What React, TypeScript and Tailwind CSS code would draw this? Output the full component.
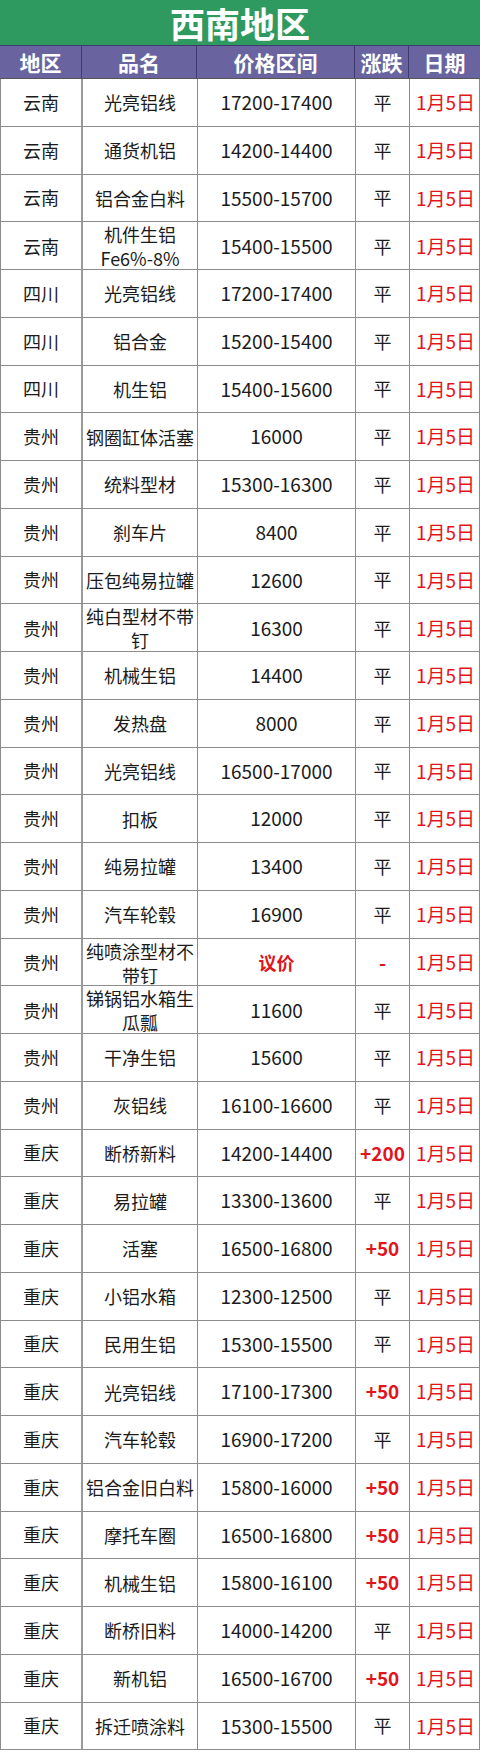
import React from 'react'

type Row = { area: string; name: string; price: string; change: string; date: string }

const rows: Row[] = [
    { area: '云南', name: '光亮铝线', price: '17200-17400', change: '平', date: '1月5日' },
    { area: '云南', name: '通货机铝', price: '14200-14400', change: '平', date: '1月5日' },
    { area: '云南', name: '铝合金白料', price: '15500-15700', change: '平', date: '1月5日' },
    { area: '云南', name: '机件生铝\nFe6%-8%', price: '15400-15500', change: '平', date: '1月5日' },
    { area: '四川', name: '光亮铝线', price: '17200-17400', change: '平', date: '1月5日' },
    { area: '四川', name: '铝合金', price: '15200-15400', change: '平', date: '1月5日' },
    { area: '四川', name: '机生铝', price: '15400-15600', change: '平', date: '1月5日' },
    { area: '贵州', name: '钢圈缸体活塞', price: '16000', change: '平', date: '1月5日' },
    { area: '贵州', name: '统料型材', price: '15300-16300', change: '平', date: '1月5日' },
    { area: '贵州', name: '刹车片', price: '8400', change: '平', date: '1月5日' },
    { area: '贵州', name: '压包纯易拉罐', price: '12600', change: '平', date: '1月5日' },
    { area: '贵州', name: '纯白型材不带\n钉', price: '16300', change: '平', date: '1月5日' },
    { area: '贵州', name: '机械生铝', price: '14400', change: '平', date: '1月5日' },
    { area: '贵州', name: '发热盘', price: '8000', change: '平', date: '1月5日' },
    { area: '贵州', name: '光亮铝线', price: '16500-17000', change: '平', date: '1月5日' },
    { area: '贵州', name: '扣板', price: '12000', change: '平', date: '1月5日' },
    { area: '贵州', name: '纯易拉罐', price: '13400', change: '平', date: '1月5日' },
    { area: '贵州', name: '汽车轮毂', price: '16900', change: '平', date: '1月5日' },
    { area: '贵州', name: '纯喷涂型材不\n带钉', price: '议价', change: '-', date: '1月5日' },
    { area: '贵州', name: '锑锅铝水箱生\n瓜瓢', price: '11600', change: '平', date: '1月5日' },
    { area: '贵州', name: '干净生铝', price: '15600', change: '平', date: '1月5日' },
    { area: '贵州', name: '灰铝线', price: '16100-16600', change: '平', date: '1月5日' },
    { area: '重庆', name: '断桥新料', price: '14200-14400', change: '+200', date: '1月5日' },
    { area: '重庆', name: '易拉罐', price: '13300-13600', change: '平', date: '1月5日' },
    { area: '重庆', name: '活塞', price: '16500-16800', change: '+50', date: '1月5日' },
    { area: '重庆', name: '小铝水箱', price: '12300-12500', change: '平', date: '1月5日' },
    { area: '重庆', name: '民用生铝', price: '15300-15500', change: '平', date: '1月5日' },
    { area: '重庆', name: '光亮铝线', price: '17100-17300', change: '+50', date: '1月5日' },
    { area: '重庆', name: '汽车轮毂', price: '16900-17200', change: '平', date: '1月5日' },
    { area: '重庆', name: '铝合金旧白料', price: '15800-16000', change: '+50', date: '1月5日' },
    { area: '重庆', name: '摩托车圈', price: '16500-16800', change: '+50', date: '1月5日' },
    { area: '重庆', name: '机械生铝', price: '15800-16100', change: '+50', date: '1月5日' },
    { area: '重庆', name: '断桥旧料', price: '14000-14200', change: '平', date: '1月5日' },
    { area: '重庆', name: '新机铝', price: '16500-16700', change: '+50', date: '1月5日' },
    { area: '重庆', name: '拆迁喷涂料', price: '15300-15500', change: '平', date: '1月5日' },
]

const cols = 'grid grid-cols-[82px_115px_158px_54px_71px]'

export default function App() {
    return (
        <div className="w-[480px] h-[1752px] overflow-hidden bg-white font-['Noto_Sans_CJK_SC','Noto_Sans',sans-serif]">
            {/* title band */}
            <div className="h-[46px] bg-[#2f9a60] flex items-center justify-center border-b border-[#3f3b6e]">
                <span className="text-[35px] font-bold text-white leading-[40px]">西南地区</span>
            </div>

            {/* header */}
            <div className={`${cols} h-[33px] bg-[#69649f] text-white text-[21px] font-bold border-b border-[#555]`}>
                {['地区', '品名', '价格区间', '涨跌', '日期'].map((h, i) => (
                    <div key={h} className={`flex items-center justify-center leading-[30px] ${i < 4 ? 'border-r border-[#3f3b6e]' : ''}`}>
                        {h}
                    </div>
                ))}
            </div>

            {/* rows */}
            <div>
                {rows.map((r, i) => {
                    const up = r.change !== '平'
                    return (
                        <div key={i} className={`${cols} h-[47.75px] border-b border-l border-r border-[#8c8c8c] text-[18px] text-[#1b1b1b]`}>
                            <div className="flex items-center justify-center border-r-2 border-[#9a9a9a]">{r.area}</div>
                            <div className="flex items-center justify-center border-r border-[#8c8c8c] text-center whitespace-pre-line leading-[24px]">{r.name}</div>
                            <div className={`flex items-center justify-center border-r border-[#8c8c8c] ${r.price === '议价' ? 'font-bold text-[#e0141c] text-[18px]' : 'text-[19px]'}`}>{r.price}</div>
                            <div className={`flex items-center justify-center border-r border-[#8c8c8c] ${up ? 'font-bold text-[#e0141c] text-[19px]' : ''}`}>{r.change}</div>
                            <div className="flex items-center justify-center text-[#e4141b] text-[19px]">{r.date}</div>
                        </div>
                    )
                })}
            </div>
        </div>
    )
}
